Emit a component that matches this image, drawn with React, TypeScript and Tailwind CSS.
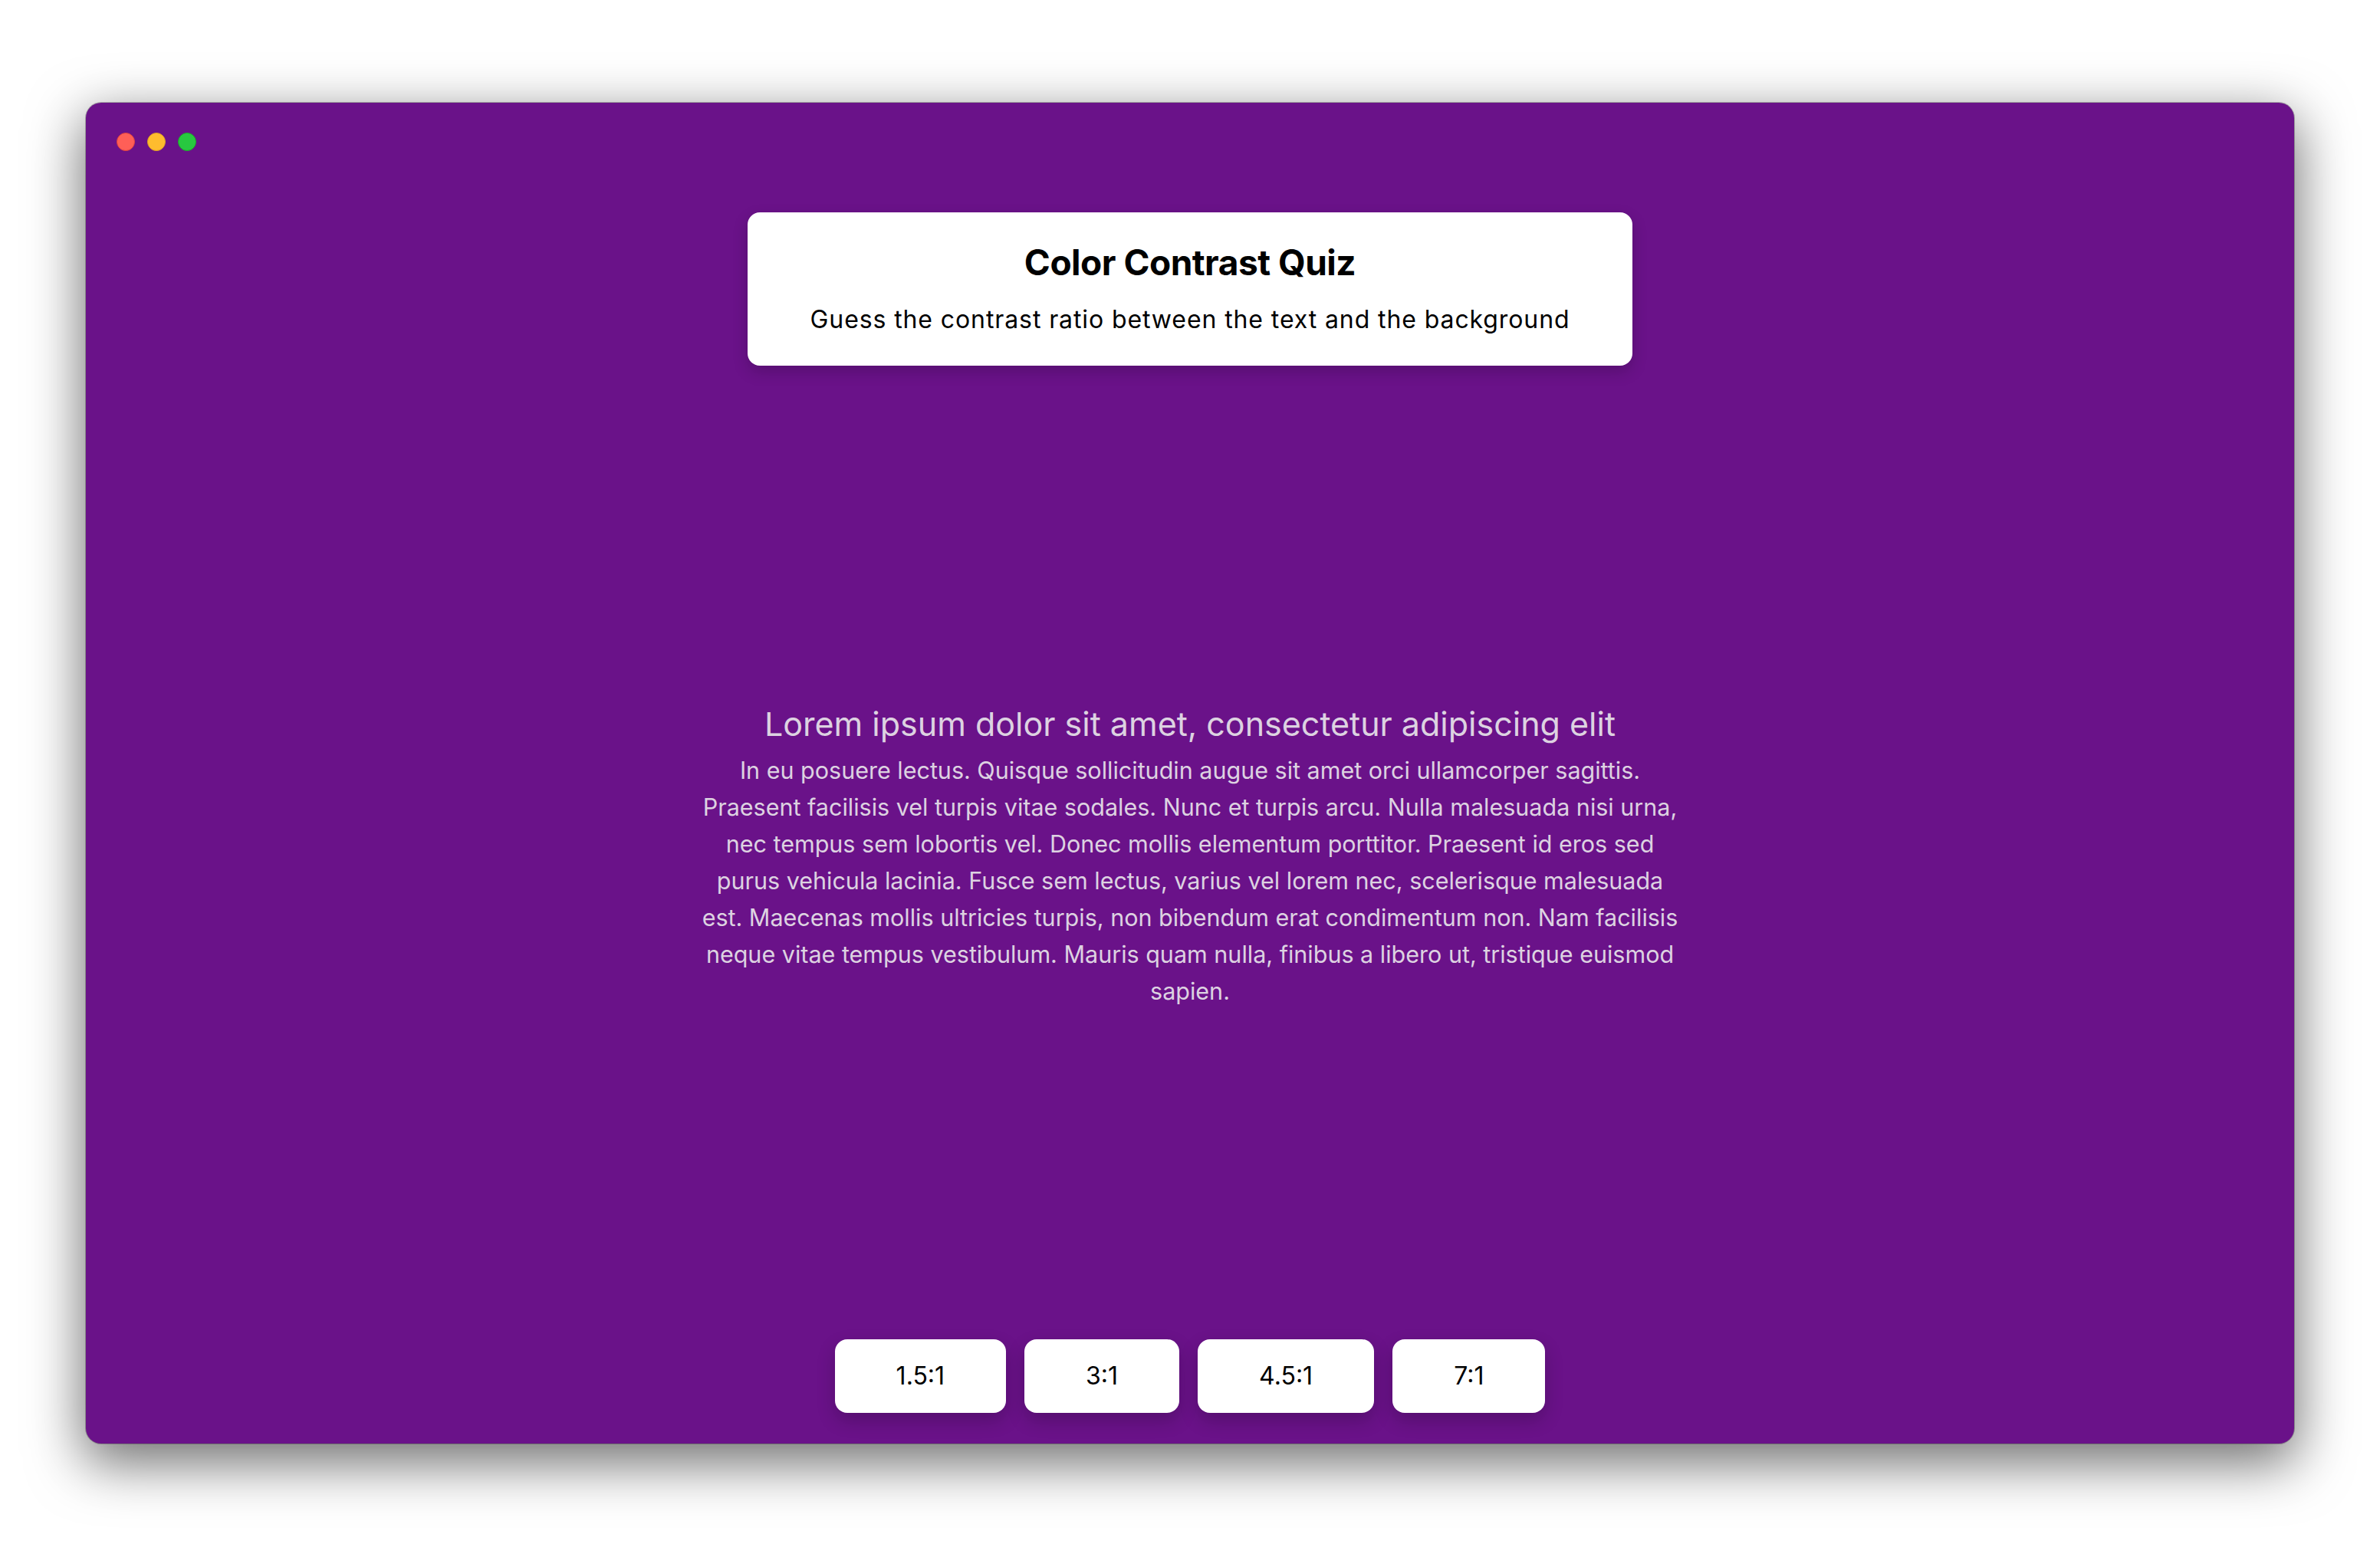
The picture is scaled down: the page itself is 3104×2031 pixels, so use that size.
import React from "react";

const options = ["1.5:1", "3:1", "4.5:1", "7:1"];

const lines = [
  "In eu posuere lectus. Quisque sollicitudin augue sit amet orci ullamcorper sagittis.",
  "Praesent facilisis vel turpis vitae sodales. Nunc et turpis arcu. Nulla malesuada nisi urna,",
  "nec tempus sem lobortis vel. Donec mollis elementum porttitor. Praesent id eros sed",
  "purus vehicula lacinia. Fusce sem lectus, varius vel lorem nec, scelerisque malesuada",
  "est. Maecenas mollis ultricies turpis, non bibendum erat condimentum non. Nam facilisis",
  "neque vitae tempus vestibulum. Mauris quam nulla, finibus a libero ut, tristique euismod",
  "sapien.",
];

export default function App() {
  return (
    <div
      className="w-[3104px] h-[2031px] bg-white flex flex-col items-center"
      style={{ fontFamily: "Inter, 'Noto Sans', sans-serif" }}
    >
      <div className="mt-[134px] w-[2880px] h-[1749px] rounded-[20px] bg-[#6a1289] shadow-[0_22px_70px_4px_rgba(0,0,0,0.56),0_0_0_1px_rgba(0,0,0,0.25)] flex flex-col">
        <div className="flex gap-[16px] mt-[39px] ml-[40px]">
          <div className="w-[24px] h-[24px] rounded-full bg-[#ff5f57] border border-[#e0443e]" />
          <div className="w-[24px] h-[24px] rounded-full bg-[#febc2e] border border-[#dea123]" />
          <div className="w-[24px] h-[24px] rounded-full bg-[#28c840] border border-[#1aab29]" />
        </div>
        <div className="flex-1 flex flex-col items-center pt-[80px] pb-[40px]">
          <div className="w-[1154px] h-[200px] bg-white rounded-[16px] shadow-[0_8px_20px_rgba(0,0,0,0.18)] flex flex-col items-center pt-[37px]">
            <h1 className="text-[46px] leading-[56px] font-bold text-black tracking-[-0.5px]">
              Color Contrast Quiz
            </h1>
            <p className="mt-[23px] text-[32px] leading-[48px] text-black tracking-[0.9px]">
              Guess the contrast ratio between the text and the background
            </p>
          </div>
          <div className="flex-1 flex flex-col items-center justify-center">
            <div className="w-[1400px] pt-[5px] text-center text-[#ddd2e1]">
              <h2 className="text-[43px] leading-[64px]">
                Lorem ipsum dolor sit amet, consectetur adipiscing elit
              </h2>
              <p className="mt-[5px] text-[30.5px] leading-[48px]">
                {lines.map((l, i) => (
                  <span key={i} className="block">
                    {l}
                  </span>
                ))}
              </p>
            </div>
          </div>
          <div className="flex gap-[24px]">
            {options.map((o) => (
              <button
                key={o}
                className="h-[96px] px-[80px] bg-white rounded-[16px] text-[32px] leading-[48px] text-black shadow-[0_10px_24px_rgba(0,0,0,0.2)]"
              >
                {o}
              </button>
            ))}
          </div>
        </div>
      </div>
    </div>
  );
}
